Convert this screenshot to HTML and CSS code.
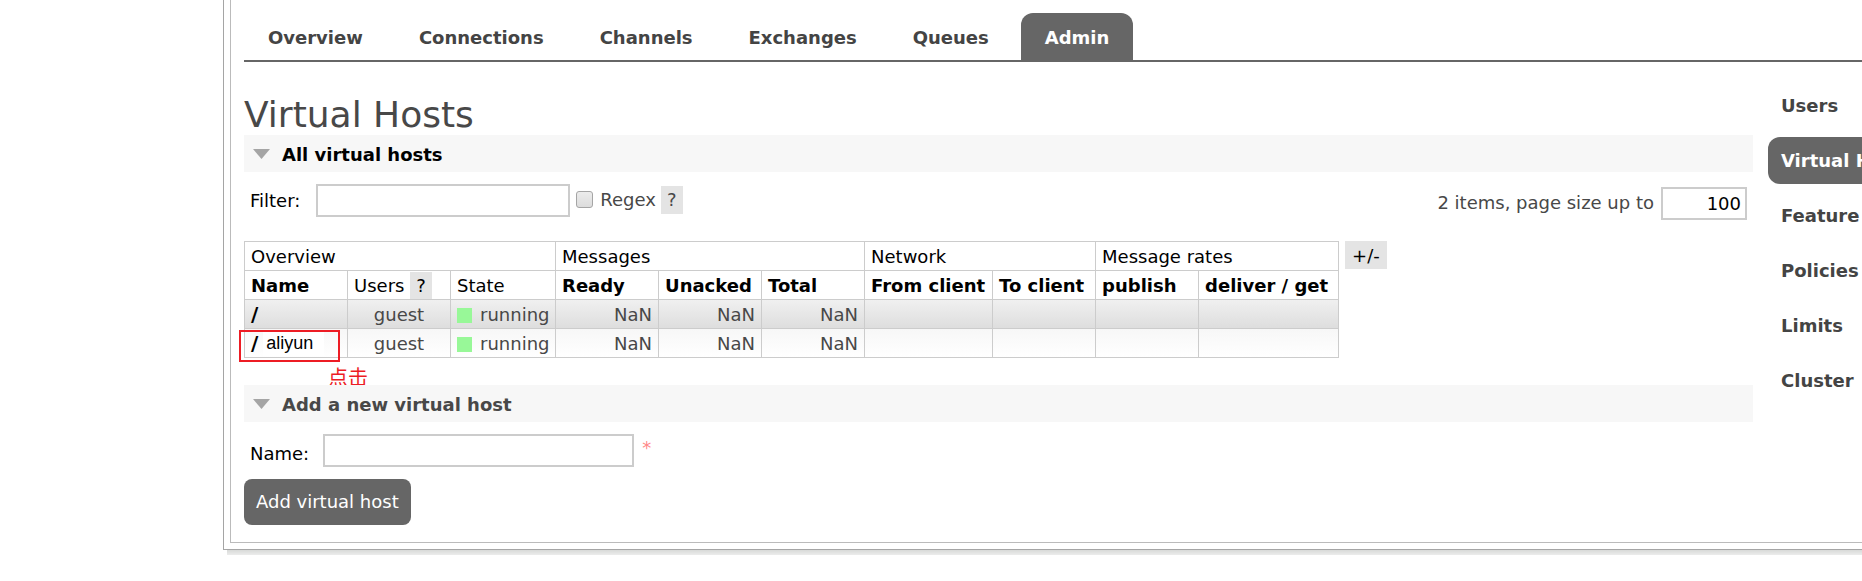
FILE: index.html
```html
<!DOCTYPE html>
<html lang="en">
<head>
<meta charset="utf-8">
<title>Virtual Hosts</title>
<link rel="stylesheet" href="styles.css">
</head>
<body>
<div class="outer">
  <div class="inner">
    <nav class="tabs" aria-label="Main">
      <a class="tab" href="#overview">Overview</a>
      <a class="tab" href="#connections">Connections</a>
      <a class="tab" href="#channels">Channels</a>
      <a class="tab" href="#exchanges">Exchanges</a>
      <a class="tab" href="#queues">Queues</a>
      <a class="tab tab-active" href="#admin">Admin</a>
    </nav>
    <div class="columns">
      <main class="main">
        <h1 class="title">Virtual Hosts</h1>
        <section>
          <h2 class="section-head section-head-hover"><svg class="arrow" viewBox="0 0 17 10" aria-hidden="true"><path d="M0 0H17L8.500 10Z"/></svg>All virtual hosts</h2>
          <div class="filter-row">
            <div class="filter">
              <label class="label" for="filter">Filter:</label>
              <input class="field filter-field" id="filter" type="text">
              <input class="check" id="regex" type="checkbox">
              <label for="regex">Regex</label>
              <button class="help" type="button">?</button>
            </div>
            <div class="paging">
              <label for="size">2 items, page size up to</label>
              <input class="field size-field" id="size" type="text" value="100">
            </div>
          </div>
          <div class="table-row">
            <table class="hosts">
              <colgroup><col class="c-std"><col class="c-std"><col class="c-state"><col class="c-std"><col class="c-std"><col class="c-std"><col class="c-from"><col class="c-std"><col class="c-std"><col class="c-get"></colgroup>
              <thead>
                <tr><th class="group" colspan="3">Overview</th><th class="group" colspan="3">Messages</th><th class="group" colspan="2">Network</th><th class="group" colspan="2">Message rates</th></tr>
                <tr><th>Name</th><th class="plain">Users <button class="help" type="button">?</button></th><th class="plain">State</th><th>Ready</th><th>Unacked</th><th>Total</th><th>From client</th><th>To client</th><th>publish</th><th>deliver / get</th></tr>
              </thead>
              <tbody>
                <tr class="odd"><td><a class="host" href="#default">/</a></td><td class="center">guest</td><td><span class="status"></span>running</td><td class="num">NaN</td><td class="num">NaN</td><td class="num">NaN</td><td></td><td></td><td></td><td></td></tr>
                <tr class="even"><td class="marked"><a class="host" href="#aliyun">/<span class="patch">aliyun</span></a><span class="mark"></span><span class="note">点击</span></td><td class="center">guest</td><td><span class="status"></span>running</td><td class="num">NaN</td><td class="num">NaN</td><td class="num">NaN</td><td></td><td></td><td></td><td></td></tr>
              </tbody>
            </table>
            <button class="help help-columns" type="button">+/-</button>
          </div>
        </section>
        <section>
          <h2 class="section-head"><svg class="arrow" viewBox="0 0 17 10" aria-hidden="true"><path d="M0 0H17L8.500 10Z"/></svg>Add a new virtual host</h2>
          <form class="form">
            <div class="form-row">
              <label class="label form-label" for="name">Name:</label>
              <input class="field name-field" id="name" type="text">
              <span class="required">*</span>
            </div>
            <button class="submit" type="button">Add virtual host</button>
          </form>
        </section>
      </main>
      <nav class="rail" aria-label="Admin">
        <a class="rail-item" href="#users">Users</a>
        <a class="rail-item rail-active" href="#vhosts">Virtual Hosts</a>
        <a class="rail-item" href="#flags">Feature Flags</a>
        <a class="rail-item" href="#policies">Policies</a>
        <a class="rail-item" href="#limits">Limits</a>
        <a class="rail-item" href="#cluster">Cluster</a>
      </nav>
    </div>
  </div>
</div>
<div class="shade"></div>
</body>
</html>
```
FILE: styles.css
```css
* { box-sizing: border-box; }

body {
  margin: 0;
  background: #fff;
  color: #484848;
  font: 18px/28px "DejaVu Sans", Verdana, sans-serif;
}

button, input { font: inherit; }
a { color: inherit; text-decoration: none; }

/* The panel is open on its right side and bleeds to the window edge. */
.outer {
  margin-left: 223px;
  padding: 0 0 6px 6px;
  border: solid #a5a5a5;
  border-width: 0 0 1px 1px;
}

.shade {
  height: 5px;
  margin-left: 227px;
  background: linear-gradient(#d8dad8, #ececec);
}

.inner {
  padding: 13px 0 17px 13px;
  border: solid #bbb;
  border-width: 0 0 1px 1px;
}

.tabs {
  display: flex;
  gap: 8px;
  border-bottom: 2px solid #666;
}

.tab {
  padding: 11px 24px 8px;
  border-radius: 12px 12px 0 0;
  color: #444;
  font-weight: bold;
}

.tab-active { background: #666; color: #fff; }

.columns { display: flex; gap: 15px; }
.main { flex: 1; min-width: 0; }

.title {
  margin: 33px 0 0;
  font-size: 36px;
  font-weight: normal;
  line-height: 40px;
}

.section-head {
  display: flex;
  align-items: center;
  gap: 12px;
  height: 37px;
  margin: 0;
  padding: 2px 0 0 9px;
  position: relative;
  background: #f7f7f7;
  font-size: 18px;
  font-weight: bold;
}

.section-head-hover { color: #000; }
.arrow { width: 17px; height: 10px; margin-bottom: 2px; fill: #a5a5a5; }

.filter-row {
  display: flex;
  justify-content: space-between;
  padding: 12px 6px 21px;
}

.filter, .paging { display: flex; align-items: center; }
.filter { height: 33px; }
.paging { gap: 7px; padding-top: 3px; }
.paging label, .check + label { padding-bottom: 2px; }
.label { color: #000; }

.field {
  height: 33px;
  padding: 0 4px;
  border: 2px solid #ccc;
  background: #fff;
  color: #000;
}

.filter-field { width: 254px; margin-left: 16px; }
.size-field { width: 86px; text-align: right; }

.check {
  appearance: none;
  width: 17px;
  height: 17px;
  margin: 0 7px 2px 6px;
  border: 1px solid #a5a5a5;
  border-radius: 3px;
  background: linear-gradient(#ececec, #dcdcdc);
}

.help {
  height: 28px;
  padding: 0 7px;
  border: 0;
  background: #e4e4e4;
  color: #000;
  line-height: 28px;
}

.filter .help { margin: 0 0 2px 5px; padding: 0 6px; color: #484848; }
.help-columns { padding-top: 1px; }

.table-row {
  display: flex;
  align-items: flex-start;
  gap: 6px;
  margin-bottom: 27px;
}

.hosts {
  width: 1095px;
  table-layout: fixed;
  border-collapse: collapse;
  line-height: 27px;
}

.c-std { width: 103px; }
.c-state { width: 105px; }
.c-from { width: 128px; }
.c-get { width: 140px; }

th, td {
  height: 29px;
  padding: 1px 6px 0;
  border: 1px solid #ccc;
  text-align: left;
  white-space: nowrap;
}

th { color: #000; }
.group, .plain { font-weight: normal; }
.plain .help { height: 27px; padding: 0 6px; line-height: 27px; vertical-align: top; }
.center { text-align: center; }
.num { text-align: right; }
.odd { background: linear-gradient(#f0f0f0, #ddd); }
.even { background: linear-gradient(#f7f7f7, #fff); }
.host { color: #000; font-size: 20px; font-weight: bold; }

.status {
  display: inline-block;
  width: 15px;
  height: 15px;
  margin-right: 8px;
  background: #98f898;
  vertical-align: -2px;
}

.patch {
  display: inline-block;
  height: 26px;
  margin-left: 5px;
  padding: 0 11px 0 3px;
  background: #fff;
  font-family: "Liberation Sans", Arial, sans-serif;
  font-size: 18px;
  font-weight: normal;
  line-height: 27px;
  vertical-align: top;
}

.marked { position: relative; }

/* Red annotation drawn over the table */
.mark {
  position: absolute;
  top: 1px;
  left: -6px;
  width: 101px;
  height: 32px;
  border: 2px solid #ed1c24;
}

.note {
  position: absolute;
  top: 34px;
  left: 83px;
  color: #ed1c24;
  font: 20px/28px "Noto Sans CJK SC", sans-serif;
}

.form { padding-top: 12px; }
.form-row { display: flex; padding-left: 6px; margin-bottom: 11px; }
.form-label { padding-top: 6px; }
.name-field { width: 311px; margin-left: 14px; }
.required { margin-left: 8px; color: #f88; }

.submit {
  height: 46px;
  padding: 0 12px;
  border: 0;
  border-radius: 8px;
  background: #666;
  color: #fff;
}

.rail {
  flex: 0 0 94px;
  display: flex;
  flex-direction: column;
  gap: 8px;
  padding-top: 20px;
  overflow: hidden;
}

.rail-item {
  padding: 10px 0 9px 13px;
  border-radius: 12px 0 0 12px;
  color: #444;
  font-weight: bold;
  white-space: nowrap;
}

.rail-active { background: #666; color: #fff; }
```
